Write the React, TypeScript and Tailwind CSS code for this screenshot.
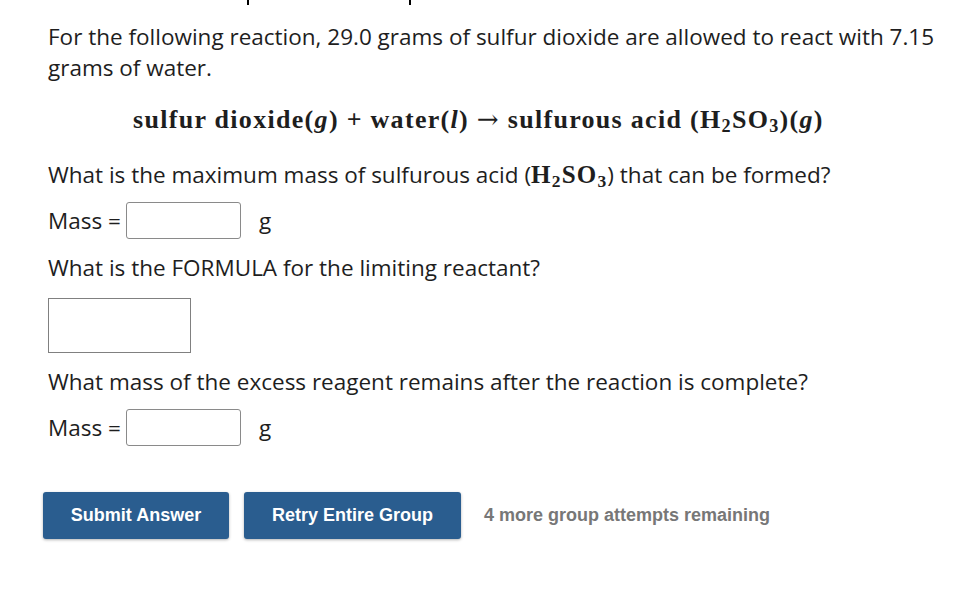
import React from "react";

const serif = { fontFamily: '"Liberation Serif", "DejaVu Serif", serif' };

const Sub = ({ children }: { children: React.ReactNode }) => (
  <span className="relative top-[0.22em] text-[0.7em] leading-none">{children}</span>
);

const H2SO3 = () => (
  <span className="font-bold text-[25px] tracking-[1.2px]" style={serif}>
    H<Sub>2</Sub>SO<Sub>3</Sub>
  </span>
);

const MassRow = () => (
  <div className="flex items-center h-[36px]">
    <span>Mass =</span>
    <input type="text" className="ml-[5px] w-[115px] h-[37px] border border-[#8a8a8a] rounded-[3px] outline-none" />
    <span className="ml-[18px]">g</span>
  </div>
);

export default function App() {
  return (
    <div className="min-h-screen bg-white text-[#1e1e1e] relative" style={{ fontFamily: '"Open Sans", sans-serif' }}>
      <div className="absolute top-0 left-[247px] w-[2px] h-[5px] bg-black" />
      <div className="absolute top-0 left-[409px] w-[2px] h-[5px] bg-black" />
      <div className="pl-[48px] pr-[20px] pt-[21px] text-[22.5px] leading-[31px]">
        <p>For the following reaction, 29.0 grams of sulfur dioxide are allowed to react with 7.15 grams of water.</p>
        <p className="mt-[21px] pl-[85px] text-[26px] font-bold tracking-[1.3px] whitespace-nowrap" style={serif}>
          sulfur dioxide(<i>g</i>) + water(<i>l</i>) <span style={{ fontFamily: '"DejaVu Serif", serif' }} className="font-normal">→</span> sulfurous acid (H<Sub>2</Sub>SO<Sub>3</Sub>)(<i>g</i>)
        </p>
        <p className="mt-[24px]">
          What is the maximum mass of sulfurous acid (<H2SO3 />) that can be formed?
        </p>
        <div className="mt-[12px]">
          <MassRow />
        </div>
        <p className="mt-[14px]">What is the FORMULA for the limiting reactant?</p>
        <input type="text" className="mt-[15px] block w-[143px] h-[55px] border-[1.5px] border-[#808080] outline-none" />
        <p className="mt-[13px]">What mass of the excess reagent remains after the reaction is complete?</p>
        <div className="mt-[12px]">
          <MassRow />
        </div>
        <div className="mt-[47px] -ml-[5px] flex items-center gap-[15px]" style={{ fontFamily: '"Liberation Sans", Arial, sans-serif' }}>
          <button className="w-[186px] h-[47px] rounded-[3px] bg-[#2a5d8f] text-white font-bold text-[18px] shadow-[0_1px_3px_rgba(0,0,0,0.3)]">
            Submit Answer
          </button>
          <button className="w-[217px] h-[47px] rounded-[3px] bg-[#2a5d8f] text-white font-bold text-[18px] shadow-[0_1px_3px_rgba(0,0,0,0.3)]">
            Retry Entire Group
          </button>
          <span className="ml-[8px] text-[#777777] font-bold text-[18px]">4 more group attempts remaining</span>
        </div>
      </div>
    </div>
  );
}
